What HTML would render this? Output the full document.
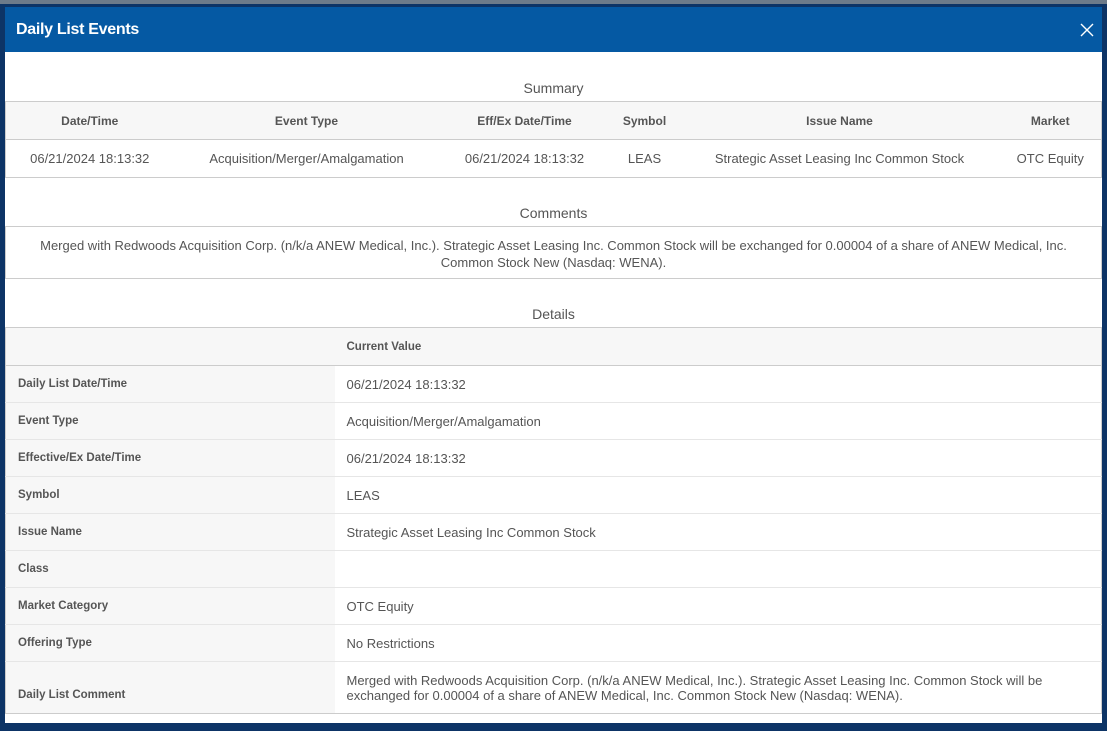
<!DOCTYPE html>
<html><head><style>
*{box-sizing:border-box;margin:0;padding:0}
body{width:1107px;height:731px;background:#6d7b8a;font-family:"Liberation Sans",sans-serif;color:#555;font-size:13px;overflow:hidden;position:relative}
.frame{position:absolute;left:0;top:4px;width:1107px;height:727px;background:#0d3466;}
.dlg{position:absolute;left:5px;top:7px;width:1097px;height:716px;background:#fff;overflow:hidden}
.hdr{height:45px;background:#0559a3;color:#fff;font-weight:bold;font-size:16px;padding:14px 0 0 11px;position:relative;letter-spacing:-0.3px}
.x{position:absolute;right:8px;top:16px;width:14px;height:14px}
.title{text-align:center;font-size:14px;color:#555;position:absolute;left:0;width:100%}
table{border-collapse:collapse;position:absolute;left:0;width:1097px}
.sum{top:94px;border:1px solid #ccc;table-layout:fixed}
.sum th{background:#f7f7f7;height:38px;font-size:12px;font-weight:bold;color:#555;border-bottom:1px solid #ccc}
.sum td{height:38px;text-align:center}
.com{position:absolute;top:219px;left:0;width:1097px;height:53px;border:1px solid #ccc;text-align:center;padding:10px 14px 0;line-height:17px;font-size:13px}
.det{top:320px;border:1px solid #ccc}
.det td{height:37px;border-bottom:1px solid #e6e6e6;padding-left:12px}
.det td.l{background:#f7f7f7;width:329px;font-weight:bold;font-size:11.5px;color:#555;vertical-align:middle}
.det tr.h td{background:#f7f7f7;font-weight:bold;font-size:11.5px;height:38px;border-bottom:1px solid #ccc}
.det tr.last td{height:52px;border-bottom:none}
.det tr.last td.l{vertical-align:bottom;padding-bottom:12px}
</style></head><body>
<div class="frame"></div>
<div class="dlg">
<div class="hdr">Daily List Events
<svg class="x" viewBox="0 0 14 14"><path d="M1 1L13 13M13 1L1 13" stroke="#fff" stroke-width="1.4"/></svg></div>
<div class="title" style="top:73px">Summary</div>
<table class="sum"><tr><th style="width:168px">Date/Time</th><th style="width:266px">Event Type</th><th style="width:170px">Eff/Ex Date/Time</th><th style="width:70px">Symbol</th><th style="width:320px">Issue Name</th><th>Market</th></tr>
<tr><td>06/21/2024 18:13:32</td><td>Acquisition/Merger/Amalgamation</td><td>06/21/2024 18:13:32</td><td>LEAS</td><td>Strategic Asset Leasing Inc Common Stock</td><td>OTC Equity</td></tr></table>
<div class="title" style="top:198px">Comments</div>
<div class="com">Merged with Redwoods Acquisition Corp. (n/k/a ANEW Medical, Inc.). Strategic Asset Leasing Inc. Common Stock will be exchanged for 0.00004 of a share of ANEW Medical, Inc.<br>Common Stock New (Nasdaq: WENA).</div>
<div class="title" style="top:299px">Details</div>
<table class="det">
<tr class="h"><td style="width:329px"></td><td>Current Value</td></tr>
<tr><td class="l">Daily List Date/Time</td><td>06/21/2024 18:13:32</td></tr>
<tr><td class="l">Event Type</td><td>Acquisition/Merger/Amalgamation</td></tr>
<tr><td class="l">Effective/Ex Date/Time</td><td>06/21/2024 18:13:32</td></tr>
<tr><td class="l">Symbol</td><td>LEAS</td></tr>
<tr><td class="l">Issue Name</td><td>Strategic Asset Leasing Inc Common Stock</td></tr>
<tr><td class="l">Class</td><td></td></tr>
<tr><td class="l">Market Category</td><td>OTC Equity</td></tr>
<tr><td class="l">Offering Type</td><td>No Restrictions</td></tr>
<tr class="last"><td class="l">Daily List Comment</td><td style="line-height:15px;padding-right:20px">Merged with Redwoods Acquisition Corp. (n/k/a ANEW Medical, Inc.). Strategic Asset Leasing Inc. Common Stock will be<br>exchanged for 0.00004 of a share of ANEW Medical, Inc. Common Stock New (Nasdaq: WENA).</td></tr>
</table>
</div>
</body></html>
